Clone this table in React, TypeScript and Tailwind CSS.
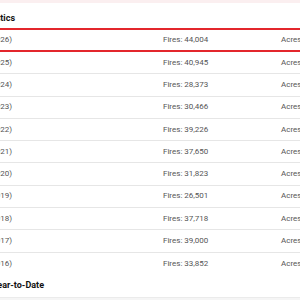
const rows = [
  { year: 2026, fires: '44,004', acres: '1,962,115' },
  { year: 2025, fires: '40,945', acres: '2,470,031' },
  { year: 2024, fires: '28,373', acres: '3,118,650' },
  { year: 2023, fires: '30,466', acres: '1,126,982' },
  { year: 2022, fires: '39,226', acres: '5,206,617' },
  { year: 2021, fires: '37,650', acres: '2,885,170' },
  { year: 2020, fires: '31,823', acres: '2,107,942' },
  { year: 2019, fires: '26,501', acres: '3,652,217' },
  { year: 2018, fires: '37,718', acres: '4,361,904' },
  { year: 2017, fires: '39,000', acres: '5,118,746' },
  { year: 2016, fires: '33,852', acres: '2,930,558' },
];

export default function App() {
  return (
    <div className="w-[300px] h-[300px] overflow-hidden bg-white font-['Roboto','Liberation_Sans',sans-serif]">
      <div className="h-[3px] bg-[#fbeff0]" />

      <div className="h-[25px] flex items-center pt-[6px]">
        <div className="w-[15px] flex justify-end shrink-0">
          <h2 className="whitespace-nowrap text-[9px] font-bold text-[#111]">Wildland Fire Statistics</h2>
        </div>
      </div>

      {rows.map((row, i) => (
        <div
          key={row.year}
          className={`grid grid-cols-[163px_118px_1fr] items-center text-[8px] text-[#555] ${
            i === 0
              ? 'h-[24px] border-y-2 border-[#e3262c]'
              : i === rows.length - 1
              ? 'h-[22px]'
              : 'h-[22.3px] border-b border-[#e6e6e6]'
          }`}
        >
          <div className="w-[12px] flex justify-end">
            <span className="whitespace-nowrap">Year-to-Date ({row.year})</span>
          </div>
          <span className="whitespace-nowrap">Fires: {row.fires}</span>
          <span className="whitespace-nowrap">Acres: {row.acres}</span>
        </div>
      ))}

      <div className="h-[22px] flex items-center">
        <div className="w-[44px] flex justify-end shrink-0">
          <h2 className="whitespace-nowrap text-[9px] font-bold text-[#111]">Prior Year-to-Date</h2>
        </div>
      </div>

      <div className="h-[10px] border-t border-[#ebebeb] bg-[#f5f5f5]" />
    </div>
  );
}
